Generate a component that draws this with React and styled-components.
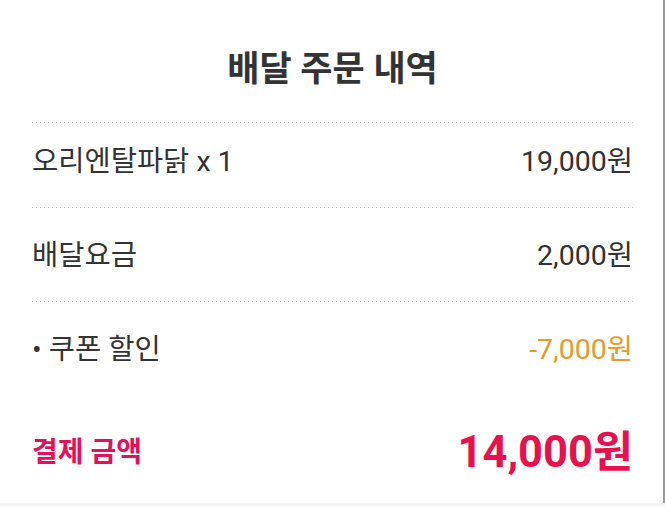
import React from "react";
import styled, { createGlobalStyle } from "styled-components";

const GlobalStyle = createGlobalStyle`
  body {
    margin: 0;
    background: #f4f4f4;
    font-family: Roboto, "Noto Sans CJK KR", sans-serif;
  }
`;

// order summary data
const items = [
  { label: "오리엔탈파닭 x 1", price: "19,000원" },
  { label: "배달요금", price: "2,000원" },
  { label: "• 쿠폰 할인", price: "-7,000원", discount: true },
];

export default function App() {
  return (
    <>
      <GlobalStyle />
      <Card>
        <Title>배달 주문 내역</Title>
        <List>
          {items.map((item, i) => (
            <Row key={i} $first={i === 0} $last={i === items.length - 1}>
              <Label>{item.label}</Label>
              <Price $discount={item.discount}>{item.price}</Price>
            </Row>
          ))}
        </List>
        <Total>
          <TotalLabel>결제 금액</TotalLabel>
          <TotalPrice>14,000원</TotalPrice>
        </Total>
      </Card>
    </>
  );
}

const Card = styled.div`
  box-sizing: border-box;
  width: 665px;
  height: 503px;
  background: #fff;
  border-right: 2px solid #9b9b9b;
  display: flex;
  flex-direction: column;
  padding: 0 30px 0 32px;
`;

const Title = styled.h1`
  margin: 0;
  padding: 50px 0 32px;
  font-size: 35px;
  line-height: 40px;
  font-weight: 700;
  color: #333;
  text-align: center;
`;

const List = styled.div`
  display: flex;
  flex-direction: column;
`;

// dotted separator drawn on top of each row
const Row = styled.div`
  display: flex;
  align-items: center;
  justify-content: space-between;
  background: linear-gradient(to right, #c6c6c6 1px, transparent 1px) top left /
    4px 1px repeat-x;
  padding: ${(p) => (p.$first ? "22px" : "31px")} 0
    ${(p) => (p.$last ? "24px" : "27px")};
  line-height: 36px;
  font-size: 28.5px;
  color: #333;
`;

const Label = styled.span``;

const Price = styled.span`
  color: ${(p) => (p.$discount ? "#e59a2a" : "#333")};
`;

const Total = styled.div`
  display: flex;
  align-items: center;
  justify-content: space-between;
  padding-top: 35px;
  line-height: 52px;
`;

const TotalLabel = styled.span`
  font-size: 28px;
  font-weight: 700;
  color: #e3105a;
`;

const TotalPrice = styled.span`
  font-size: 43.5px;
  font-weight: 700;
  color: #e8104e;
`;
